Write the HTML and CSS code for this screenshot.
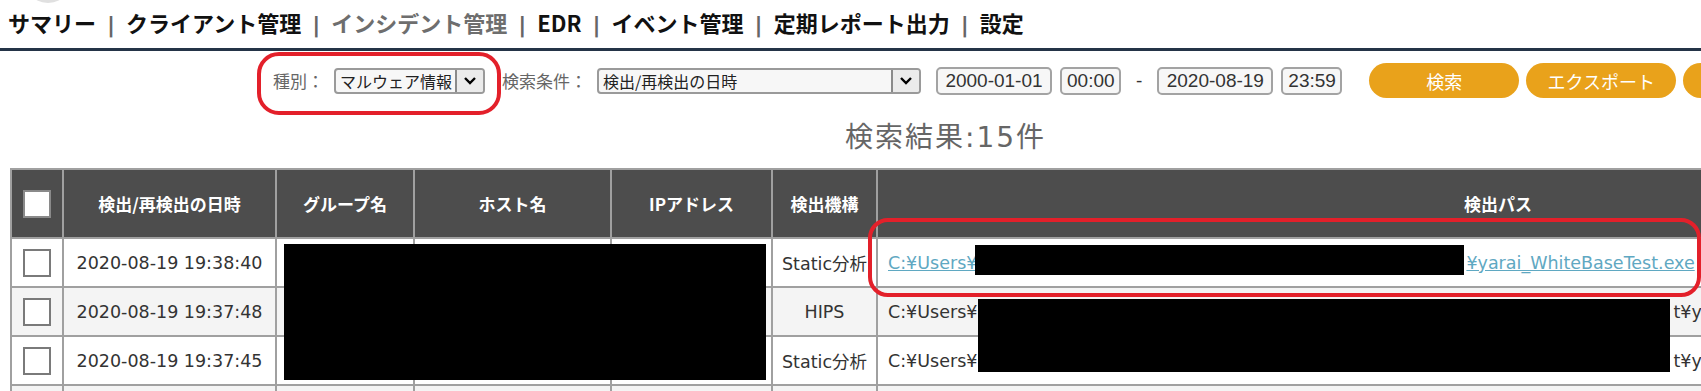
FILE: index.html
```html
<!DOCTYPE html>
<html lang="ja">
<head>
    <meta charset="UTF-8">
    <meta name="viewport" content="width=device-width, initial-scale=1.0">
    <title>インシデント管理</title>
    <link rel="stylesheet" href="styles.css">
</head>
<body>
<div class="page">
    <div class="logo-edge"></div>

    <nav class="menu">
        <a href="#">サマリー</a><span class="sep">|</span><a href="#">クライアント管理</a><span class="sep">|</span><a href="#" class="current">インシデント管理</a><span class="sep">|</span><a href="#">EDR</a><span class="sep">|</span><a href="#">イベント管理</a><span class="sep">|</span><a href="#">定期レポート出力</a><span class="sep">|</span><a href="#">設定</a>
    </nav>

    <div class="filter">
        <span class="label">種別：</span>
        <span class="select type-select">
            <span class="select-value">マルウェア情報</span>
            <span class="select-arrow"><svg width="14" height="10" viewBox="0 0 14 10"><path d="M2 2 L7 7 L12 2" fill="none" stroke="#000" stroke-width="2.4"/></svg></span>
        </span>
        <span class="label">検索条件：</span>
        <span class="select cond-select">
            <span class="select-value">検出/再検出の日時</span>
            <span class="select-arrow"><svg width="14" height="10" viewBox="0 0 14 10"><path d="M2 2 L7 7 L12 2" fill="none" stroke="#000" stroke-width="2.4"/></svg></span>
        </span>
        <span class="field date">2000-01-01</span>
        <span class="field time">00:00</span>
        <span class="dash">-</span>
        <span class="field date">2020-08-19</span>
        <span class="field time last">23:59</span>
        <button class="btn">検索</button>
        <button class="btn">エクスポート</button>
        <button class="btn"></button>
    </div>

    <div class="result-count">検索結果:15件</div>

    <div class="table-wrap">
        <table class="incidents">
            <colgroup>
                <col style="width: 52px">
                <col style="width: 213px">
                <col style="width: 138px">
                <col style="width: 197px">
                <col style="width: 161px">
                <col style="width: 105px">
                <col style="width: 1242px">
            </colgroup>
            <thead>
                <tr>
                    <th><span class="check head-check"></span></th>
                    <th>検出/再検出の日時</th>
                    <th>グループ名</th>
                    <th>ホスト名</th>
                    <th>IPアドレス</th>
                    <th>検出機構</th>
                    <th>検出パス</th>
                </tr>
            </thead>
            <tbody>
                <tr>
                    <td><span class="check"></span></td>
                    <td>2020-08-19 19:38:40</td>
                    <td></td>
                    <td></td>
                    <td></td>
                    <td>Static分析</td>
                    <td class="path"><a href="#" class="path-link">C:¥Users¥<span class="gap gap-short"></span>¥yarai_WhiteBaseTest.exe</a></td>
                </tr>
                <tr class="alt">
                    <td><span class="check"></span></td>
                    <td>2020-08-19 19:37:48</td>
                    <td></td>
                    <td></td>
                    <td></td>
                    <td>HIPS</td>
                    <td class="path">C:¥Users¥<span class="gap gap-long"></span>t¥yarai_WhiteBaseTest.exe</td>
                </tr>
                <tr>
                    <td><span class="check"></span></td>
                    <td>2020-08-19 19:37:45</td>
                    <td></td>
                    <td></td>
                    <td></td>
                    <td>Static分析</td>
                    <td class="path">C:¥Users¥<span class="gap gap-long"></span>t¥yarai_WhiteBaseTest.exe</td>
                </tr>
                <tr class="alt">
                    <td><span class="check"></span></td>
                    <td>2020-08-19 19:37:40</td>
                    <td></td>
                    <td></td>
                    <td></td>
                    <td>HIPS</td>
                    <td class="path">C:¥Users¥</td>
                </tr>
            </tbody>
        </table>
    </div>

    <!-- redactions and annotation marks drawn over the screenshot -->
    <div class="redact redact-hosts"></div>
    <div class="redact redact-path-1"></div>
    <div class="redact redact-path-2"></div>
    <div class="mark mark-type"></div>
    <div class="mark mark-path"></div>
</div>
</body>
</html>
```

FILE: styles.css
```css
body {
    margin: 0;
    font-family: "Noto Sans CJK JP", "Liberation Sans", sans-serif;
    color: #222;
    background-color: #fff;
}
.page {
    position: relative;
}
.logo-edge {
    position: absolute;
    left: 33px;
    top: -14px;
    width: 30px;
    height: 17px;
    border-radius: 50%;
    background-color: #e0e0e0;
}

/* top menu */
.menu {
    height: 44px;
    padding: 0 0 4px 8px;
    border-bottom: 3px solid #243447;
    font-size: 22px;
    font-weight: bold;
    line-height: 44px;
    white-space: nowrap;
}
.menu a {
    color: #111;
    text-decoration: none;
}
.menu a.current {
    color: #6e6e6e;
}
.menu .sep {
    margin: 0 11px;
    font-family: "DejaVu Sans", sans-serif;
    color: #666;
}

/* search bar */
.filter {
    display: flex;
    align-items: center;
    height: 35px;
    padding: 12px 0 0 273px;
    white-space: nowrap;
}
.filter > * {
    flex: none;
}
.label {
    margin-right: 10px;
    font-size: 17px;
    color: #666;
}
.select {
    display: flex;
    box-sizing: border-box;
    height: 26px;
    border: 2px solid #9a9a9a;
    border-radius: 4px;
    background-color: #f7f7f7;
    overflow: hidden;
}
.type-select {
    width: 151px;
    margin-right: 17px;
}
.cond-select {
    width: 324px;
    margin-right: 15px;
}
.select-value {
    flex: 1;
    padding-left: 4px;
    font-size: 16px;
    line-height: 22px;
    color: #222;
}
.select-arrow {
    display: flex;
    align-items: center;
    justify-content: center;
    width: 26px;
    border-left: 2px solid #8a8a8a;
    background-color: #ebebeb;
}
.field {
    box-sizing: border-box;
    height: 28px;
    padding: 0 5px;
    border: 2px solid #a3a3a3;
    border-radius: 5px;
    background-color: #f7f7f7;
    font-family: "Liberation Sans", Arial, sans-serif;
    font-size: 19px;
    line-height: 24px;
    text-align: center;
    color: #333;
}
.field.date {
    width: 116px;
    margin-right: 8px;
}
.field.time {
    width: 61px;
}
.field.last {
    margin-right: 27px;
}
.dash {
    margin: 0 15px;
    font-family: "Liberation Sans", Arial, sans-serif;
    font-size: 19px;
    color: #333;
}
.btn {
    width: 150px;
    height: 35px;
    margin-right: 7px;
    padding: 0;
    border: none;
    border-radius: 18px;
    background-color: #e9a21b;
    color: #fff;
    font-family: "Noto Sans CJK JP", sans-serif;
    font-size: 18px;
}

/* result count */
.result-count {
    margin-top: 20px;
    padding-left: 845px;
    font-family: "DejaVu Sans", "Noto Sans CJK JP", sans-serif;
    font-size: 28px;
    letter-spacing: 2px;
    line-height: 40px;
    color: #666;
    white-space: nowrap;
}

/* result table */
.table-wrap {
    margin-top: 10px;
    padding-left: 10px;
}
.incidents {
    width: 2108px;
    border-collapse: collapse;
    table-layout: fixed;
}
.incidents th,
.incidents td {
    border: 2px solid #a0a0a0;
    padding: 0;
    text-align: center;
}
.incidents th {
    height: 67px;
    background-color: #4d4d4d;
    color: #fff;
    font-size: 17px;
    font-weight: bold;
}
.incidents td {
    height: 47px;
    font-family: "DejaVu Sans", "Noto Sans CJK JP", sans-serif;
    font-size: 17.5px;
    color: #333;
    white-space: nowrap;
}
.incidents tr.alt td {
    background-color: #f4f4f4;
}
.incidents td.path {
    padding-left: 10px;
    text-align: left;
}
.path-link {
    color: #5fa8c2;
}
.gap {
    display: inline-block;
}
.gap-short {
    width: 489px;
}
.gap-long {
    width: 696px;
}
.check {
    display: inline-block;
    box-sizing: border-box;
    width: 28px;
    height: 28px;
    border: 2px solid #7a7a7a;
    background-color: #fff;
    vertical-align: middle;
}
.head-check {
    border-color: #8a8a8a;
}

/* overlays */
.redact {
    position: absolute;
    background-color: #000;
}
.redact-hosts {
    left: 284px;
    top: 244px;
    width: 482px;
    height: 136px;
}
.redact-path-1 {
    left: 975px;
    top: 245px;
    width: 489px;
    height: 30px;
}
.redact-path-2 {
    left: 978px;
    top: 299px;
    width: 692px;
    height: 73px;
}
.mark {
    position: absolute;
    box-sizing: border-box;
    border: 4px solid #e3202a;
    border-radius: 22px;
}
.mark-type {
    left: 257px;
    top: 52px;
    width: 244px;
    height: 63px;
}
.mark-path {
    left: 868px;
    top: 218px;
    width: 833px;
    height: 79px;
    border-radius: 20px;
}
```
